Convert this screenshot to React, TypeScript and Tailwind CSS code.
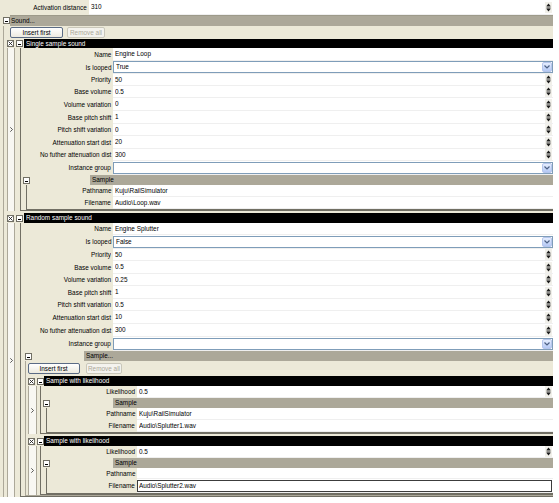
import React from 'react';

// property-grid style editor for a sound definition
const FONT = "font-['Liberation_Sans',Arial,sans-serif]";

type Kind = 'text' | 'spin' | 'combo' | 'edit';

interface Prop {
  label: string;
  value?: string;
  kind?: Kind;
  h: string;
}

// narrow caption text, squeezed from the anchored side
function T({ children, at = 'left' }: { children: React.ReactNode; at?: 'left' | 'right' | 'center' }) {
  const origin = at === 'right' ? 'origin-right' : at === 'center' ? 'origin-center' : 'origin-left';
  return <span className={`inline-block whitespace-nowrap scale-x-[0.8] ${origin}`}>{children}</span>;
}

function Spinner() {
  return (
    <svg width="7" height="11" viewBox="0 0 7 11" className="shrink-0 mr-[1px]">
      <rect width="7" height="11" fill="#f1f0ea" />
      <path d="M1.5 4h4L3.5 1.5z" fill="#1a1a1a" />
      <rect x="1.5" y="4.5" width="4" height="0.8" fill="#1a1a1a" />
      <rect x="1.5" y="5.8" width="4" height="0.8" fill="#1a1a1a" />
      <path d="M1.5 7h4L3.5 9.5z" fill="#1a1a1a" />
    </svg>
  );
}

function DropButton() {
  return (
    <div className="w-[10px] h-[10px] shrink-0 rounded-[2px] border border-[#b6c6ec] bg-gradient-to-b from-[#e6eefe] to-[#b4c8f4] flex items-center justify-center">
      <svg width="6" height="4" viewBox="0 0 6 4">
        <path d="M0.5 0.5L3 3L5.5 0.5" stroke="#4d6185" strokeWidth="1.2" fill="none" />
      </svg>
    </div>
  );
}

function MinusBox({ className = '' }: { className?: string }) {
  return (
    <div className={`w-[7px] h-[7px] shrink-0 self-center border border-[#716f64] bg-white flex items-end justify-center pb-[1px] ${className}`}>
      <div className="w-[3px] h-[1px] bg-black" />
    </div>
  );
}

function XBox({ className = '' }: { className?: string }) {
  return (
    <div className={`w-[7px] h-[7px] shrink-0 self-center border border-[#716f64] bg-white ${className}`}>
      <svg width="5" height="5" viewBox="0 0 5 5" className="block">
        <path d="M0.5 0.5L4.5 4.5M4.5 0.5L0.5 4.5" stroke="#222" strokeWidth="0.9" />
      </svg>
    </div>
  );
}

function PropRow({ label, value = '', kind = 'text', h, lw }: Prop & { lw: string }) {
  return (
    <div className={`flex ${h}`}>
      <div className={`${lw} shrink-0 flex items-center justify-end pr-[2px]`}>
        <T at="right">{label}</T>
      </div>
      <div className="flex-1 min-w-0 flex items-center bg-white border-b border-[#efefef]">
        {kind === 'combo' ? (
          <div className="flex-1 h-[12px] flex items-center border border-[#7f9db9] pl-[2px]">
            <span className="flex-1">
              <T>{value}</T>
            </span>
            <DropButton />
          </div>
        ) : kind === 'edit' ? (
          <div className="flex-1 h-[12px] flex items-center border border-[#3c3c3c] pl-[1px] mr-[1px]">
            <T>{value}</T>
          </div>
        ) : (
          <>
            <span className="flex-1 pl-[2px]">
              <T>{value}</T>
            </span>
            {kind === 'spin' && <Spinner />}
          </>
        )}
      </div>
    </div>
  );
}

function XpButton({ label, w, disabled }: { label: string; w: string; disabled?: boolean }) {
  return (
    <div
      className={`${w} h-[11px] rounded-[2px] border flex items-center justify-center ${
        disabled ? 'border-[#c9c7ba] text-[#aca899] bg-[#f4f3ee]' : 'border-[#5a6b85] bg-gradient-to-b from-white to-[#eceae0]'
      }`}
    >
      <T at="center">{label}</T>
    </div>
  );
}

function Chevron() {
  return (
    <svg width="3" height="5" viewBox="0 0 3 5">
      <path d="M0.3 0.3L2.5 2.5L0.3 4.7" stroke="#333" strokeWidth="0.8" fill="none" />
    </svg>
  );
}

// gray caption bar of an expandable group; gap is the beige run before the gray
function GroupCaption({ title, ml, gap }: { title: string; ml: string; gap: string }) {
  return (
    <div className="flex h-[10px]">
      <MinusBox className={ml} />
      <div className={`${gap} shrink-0`} />
      <div className="flex-1 bg-[#aca899] flex items-center pl-[2px]">
        <T>{title}</T>
      </div>
    </div>
  );
}

// nested object ("Sample") with its own collapse box and gray caption
function SubObject({ title, level, rows }: { title: string; level: 1 | 2; rows: Prop[] }) {
  return (
    <div>
      <GroupCaption title={title} ml="ml-[2px]" gap={level === 1 ? 'w-[60px]' : 'w-[63px]'} />
      <div className="ml-[5px] border-l border-b border-[#716f64]">
        {rows.map((r) => (
          <PropRow key={r.label} {...r} lw={level === 1 ? 'w-[86px]' : 'w-[90px]'} />
        ))}
      </div>
    </div>
  );
}

// one entry of a collection: black title bar, row selector column and body
function CollectionItem({
  title,
  level,
  h,
  children,
}: {
  title: string;
  level: 1 | 2;
  h: string;
  children: React.ReactNode;
}) {
  return (
    <div>
      <div className={`flex ${h}`}>
        <XBox className={level === 1 ? 'ml-[3px]' : 'ml-[2px]'} />
        <MinusBox className="ml-[2px]" />
        <div className={`flex-1 bg-black text-white flex items-center pl-[2px] ${level === 1 ? 'ml-[1px]' : ''}`}>
          <T>{title}</T>
        </div>
      </div>
      <div className="flex">
        <div
          className={`${level === 1 ? 'ml-[3px] w-[8px]' : 'ml-[2px] w-[9px]'} shrink-0 bg-[#f8f7f2] border-x border-[#aca899] flex items-center justify-center`}
        >
          <Chevron />
        </div>
        <div className={`${level === 1 ? 'w-[5px]' : 'w-[3px]'} shrink-0`} />
        <div className="flex-1 min-w-0 border-l border-b border-[#716f64]">{children}</div>
      </div>
    </div>
  );
}

const singleRows: Prop[] = [
  { label: 'Name', value: 'Engine Loop', h: 'h-[13px]' },
  { label: 'Is looped', value: 'True', kind: 'combo', h: 'h-[13px]' },
  { label: 'Priority', value: '50', kind: 'spin', h: 'h-[12px]' },
  { label: 'Base volume', value: '0.5', kind: 'spin', h: 'h-[12px]' },
  { label: 'Volume variation', value: '0', kind: 'spin', h: 'h-[13px]' },
  { label: 'Base pitch shift', value: '1', kind: 'spin', h: 'h-[13px]' },
  { label: 'Pitch shift variation', value: '0', kind: 'spin', h: 'h-[12px]' },
  { label: 'Attenuation start dist', value: '20', kind: 'spin', h: 'h-[13px]' },
  { label: 'No futher attenuation dist', value: '300', kind: 'spin', h: 'h-[12px]' },
  { label: 'Instance group', value: '', kind: 'combo', h: 'h-[14px]' },
];

const randomRows: Prop[] = [
  { label: 'Name', value: 'Engine Splutter', h: 'h-[12px]' },
  { label: 'Is looped', value: 'False', kind: 'combo', h: 'h-[14px]' },
  { label: 'Priority', value: '50', kind: 'spin', h: 'h-[12px]' },
  { label: 'Base volume', value: '0.5', kind: 'spin', h: 'h-[13px]' },
  { label: 'Volume variation', value: '0.25', kind: 'spin', h: 'h-[12px]' },
  { label: 'Base pitch shift', value: '1', kind: 'spin', h: 'h-[13px]' },
  { label: 'Pitch shift variation', value: '0.5', kind: 'spin', h: 'h-[12px]' },
  { label: 'Attenuation start dist', value: '10', kind: 'spin', h: 'h-[13px]' },
  { label: 'No futher attenuation dist', value: '300', kind: 'spin', h: 'h-[13px]' },
  { label: 'Instance group', value: '', kind: 'combo', h: 'h-[14px]' },
];

export default function App() {
  return (
    <div className="w-[559px] h-[503px] bg-white overflow-hidden">
      <div className={`w-[553px] bg-[#ece9d8] text-black text-[8px] leading-none ${FONT}`}>
        <PropRow label="Activation distance" value="310" kind="spin" h="h-[15px]" lw="w-[89px]" />

        {/* Sound group */}
        <div className="flex h-[11px]">
          <MinusBox className="ml-[3px]" />
          <div className="flex-1 bg-[#aca899] border-t border-[#9d9a8a] flex items-center pl-[1px]">
            <T>Sound...</T>
          </div>
        </div>
        <div className="ml-[3px] border-l border-[#aca899]">
          <div className="flex items-center h-[13px] pl-[6px] gap-[4px]">
            <XpButton label="Insert first" w="w-[53px]" />
            <XpButton label="Remove all" w="w-[38px]" disabled />
          </div>

          <CollectionItem title="Single sample sound" level={1} h="h-[9px]">
            {singleRows.map((r) => (
              <PropRow key={r.label} {...r} lw="w-[92px]" />
            ))}
            <SubObject
              title="Sample"
              level={1}
              rows={[
                { label: 'Pathname', value: 'Kuju\\RailSimulator', h: 'h-[12px]' },
                { label: 'Filename', value: 'Audio\\Loop.wav', h: 'h-[12px]' },
              ]}
            />
          </CollectionItem>
          <div className="h-[2px]" />

          <CollectionItem title="Random sample sound" level={1} h="h-[10px]">
            {randomRows.map((r) => (
              <PropRow key={r.label} {...r} lw="w-[92px]" />
            ))}

            {/* nested "Sample..." collection */}
            <GroupCaption title="Sample..." ml="ml-[4px]" gap="w-[52px]" />
            <div className="ml-[4px] border-l border-b border-[#aca899]">
              <div className="flex items-center h-[15px] pl-[2px] gap-[6px]">
                <XpButton label="Insert first" w="w-[52px]" />
                <XpButton label="Remove all" w="w-[36px]" disabled />
              </div>

              <CollectionItem title="Sample with likelihood" level={2} h="h-[10px]">
                <PropRow label="Likelihood" value="0.5" kind="spin" h="h-[12px]" lw="w-[96px]" />
                <SubObject
                  title="Sample"
                  level={2}
                  rows={[
                    { label: 'Pathname', value: 'Kuju\\RailSimulator', h: 'h-[12px]' },
                    { label: 'Filename', value: 'Audio\\Splutter1.wav', h: 'h-[12px]' },
                  ]}
                />
              </CollectionItem>
              <div className="h-[2px]" />

              <CollectionItem title="Sample with likelihood" level={2} h="h-[10px]">
                <PropRow label="Likelihood" value="0.5" kind="spin" h="h-[12px]" lw="w-[96px]" />
                <SubObject
                  title="Sample"
                  level={2}
                  rows={[
                    { label: 'Pathname', value: '', h: 'h-[11px]' },
                    { label: 'Filename', value: 'Audio\\Splutter2.wav', kind: 'edit', h: 'h-[14px]' },
                  ]}
                />
              </CollectionItem>
            </div>
          </CollectionItem>
        </div>
      </div>
    </div>
  );
}
